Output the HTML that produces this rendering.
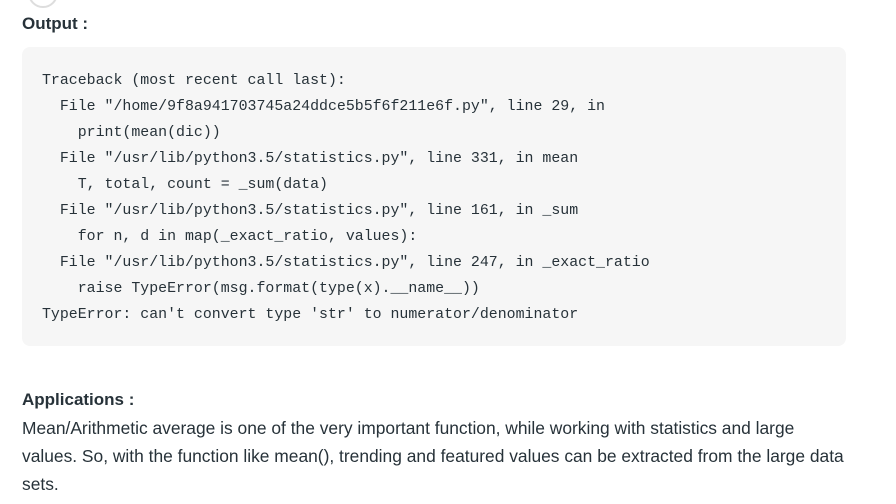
<!DOCTYPE html>
<html><head><style>
body{margin:0;width:896px;height:504px;background:#fff;position:relative;overflow:hidden;font-family:"Liberation Sans",sans-serif;color:#273239}
.circ{position:absolute;left:28px;top:-22px;width:26px;height:26px;border-radius:50%;border:2px solid #ddd}
h4{position:absolute;left:22px;margin:0;font-size:17px;font-weight:bold;color:#273239}
.code{position:absolute;left:22px;top:47px;width:824px;height:299px;background:#f6f6f6;border-radius:8px}
pre{position:absolute;left:42px;top:68px;margin:0;font-family:"Liberation Mono",monospace;font-size:14.9px;line-height:26px;color:#273239}
p{position:absolute;left:22px;top:414px;margin:0;width:826px;font-size:17.4px;line-height:28px;color:#273239}
</style></head><body>
<div class="circ"></div>
<h4 style="top:14px">Output :</h4>
<div class="code"></div>
<pre>Traceback (most recent call last):
  File "/home/9f8a941703745a24ddce5b5f6f211e6f.py", line 29, in
    print(mean(dic))
  File "/usr/lib/python3.5/statistics.py", line 331, in mean
    T, total, count = _sum(data)
  File "/usr/lib/python3.5/statistics.py", line 161, in _sum
    for n, d in map(_exact_ratio, values):
  File "/usr/lib/python3.5/statistics.py", line 247, in _exact_ratio
    raise TypeError(msg.format(type(x).__name__))
TypeError: can't convert type 'str' to numerator/denominator</pre>
<h4 style="top:390px">Applications :</h4>
<p>Mean/Arithmetic average is one of the very important function, while working with statistics and large<br>values. So, with the function like mean(), trending and featured values can be extracted from the large data<br>sets.</p>
</body></html>
